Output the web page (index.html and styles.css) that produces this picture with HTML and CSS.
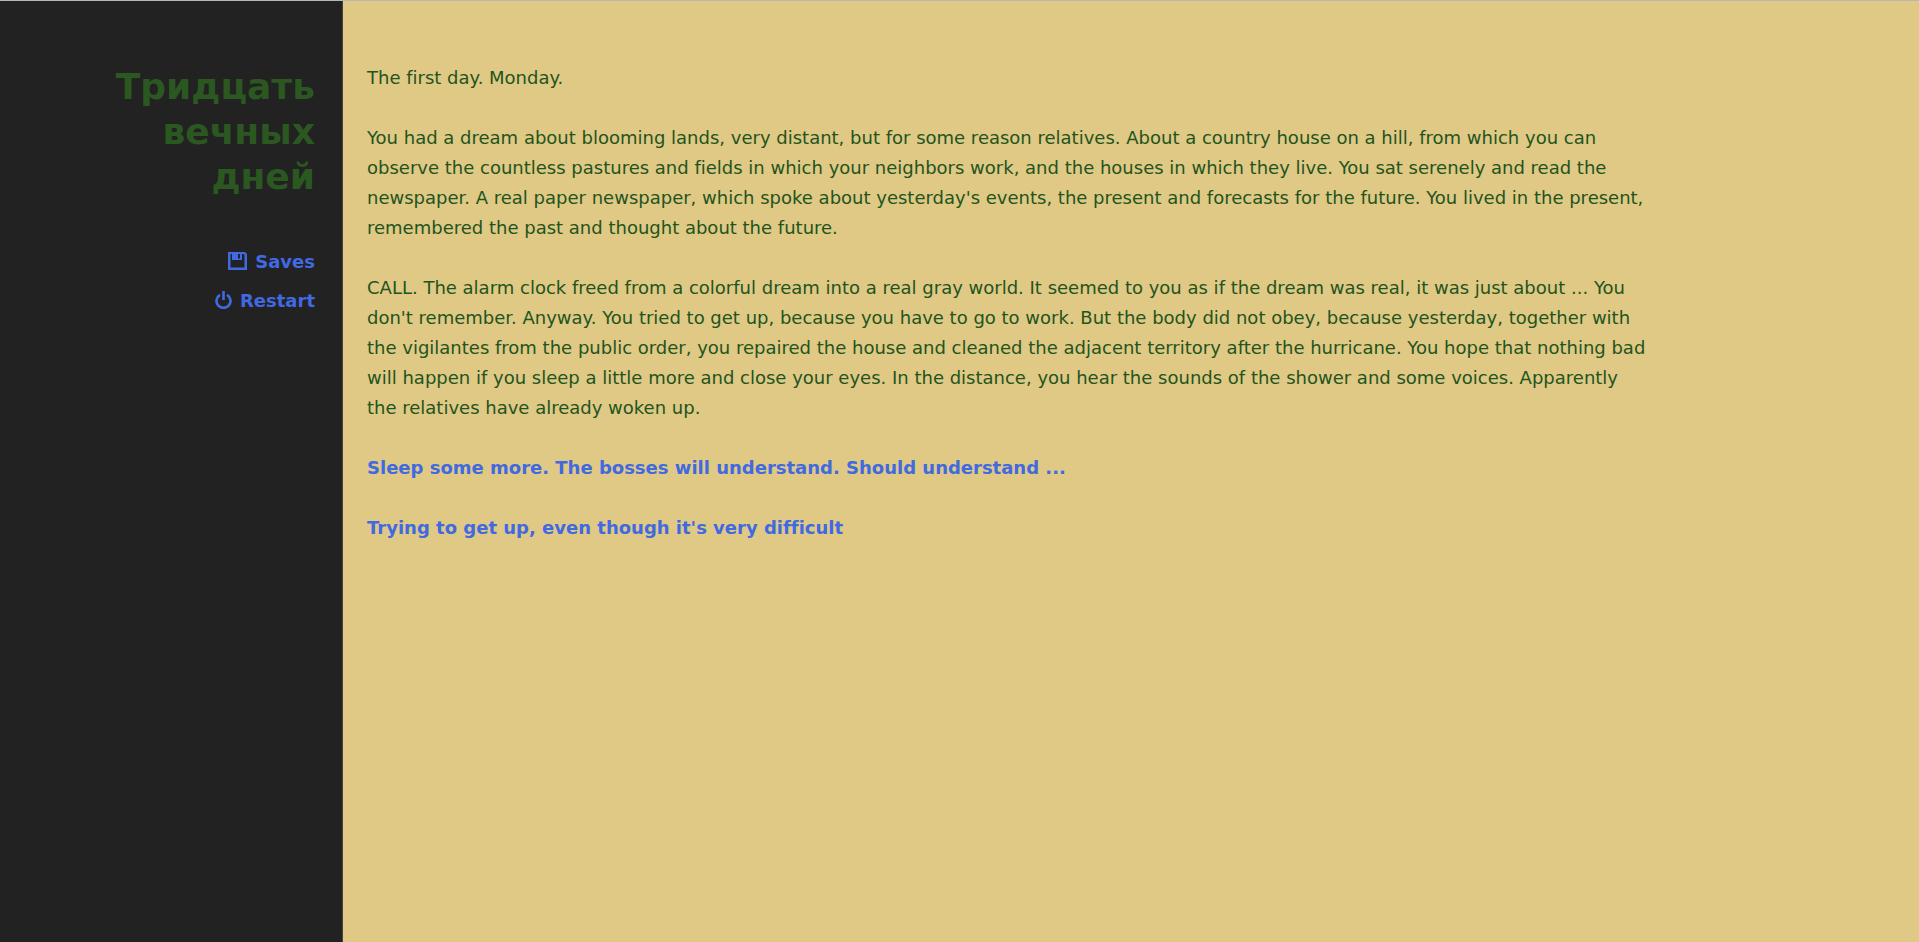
FILE: index.html
```
<!DOCTYPE html>
<html lang="ru">
<head>
<meta charset="utf-8">
<title>Тридцать вечных дней</title>
<link rel="stylesheet" href="styles.css">
</head>
<body>
<div class="page">
<aside class="sidebar">
<h1 class="title">Тридцать вечных дней</h1>
<nav class="menu">
<button class="menu-item" type="button"><svg class="icon" viewBox="0 0 19 18" aria-hidden="true"><path fill-rule="evenodd" d="M0 0h17l2 2v16H0zM2.500 2v13.500h14V3l-1-1h-1.500v6H4V2zM10 2v4.500h2V2z"/></svg>Saves</button>
<button class="menu-item" type="button"><svg class="icon power" viewBox="0 0 17 18" aria-hidden="true"><path class="stroke" d="M5 3.800a7 7 0 1 0 7 0M8.500 0v9"/></svg>Restart</button>
</nav>
</aside>
<main class="story" lang="en">
<div class="passage">
<p>The first day. Monday.</p>
<p>You had a dream about blooming lands, very distant, but for some reason relatives. About a country house on a hill, from which you can observe the countless pastures and fields in which your neighbors work, and the houses in which they live. You sat serenely and read the newspaper. A real paper newspaper, which spoke about yesterday's events, the present and forecasts for the future. You lived in the present, remembered the past and thought about the future.</p>
<p>CALL. The alarm clock freed from a colorful dream into a real gray world. It seemed to you as if the dream was real, it was just about ... You don't remember. Anyway. You tried to get up, because you have to go to work. But the body did not obey, because yesterday, together with the vigilantes from the public order, you repaired the house and cleaned the adjacent territory after the hurricane. You hope that nothing bad will happen if you sleep a little more and close your eyes. In the distance, you hear the sounds of the shower and some voices. Apparently the relatives have already woken up.</p>
<p><a class="choice" href="#sleep">Sleep some more. The bosses will understand. Should understand ...</a></p>
<p><a class="choice" href="#rise">Trying to get up, even though it's very difficult</a></p>
</div>
</main>
</div>
</body>
</html>
```
FILE: styles.css
```
* { box-sizing: border-box; }
body {
  margin: 0;
  background: #dfc984;
  color: #24541e;
  font: 18px/30px Verdana, "DejaVu Sans", sans-serif;
  font-variant-ligatures: none;
}
.page {
  display: flex;
  min-height: 100vh;
  border-top: 1px solid #b5b8b5;
}
.sidebar {
  flex: 0 0 343px;
  padding: 63px 27px 0 100px;
  background: #222;
  border-right: 1px solid #444;
  text-align: right;
}
.title {
  margin: 0 0 48px;
  color: #2b5720;
  font-size: 36px;
  line-height: 45px;
}
.menu {
  display: flex;
  flex-direction: column;
  align-items: flex-end;
  gap: 9px;
}
.menu-item {
  display: flex;
  align-items: center;
  gap: 8px;
  padding: 0;
  border: 0;
  background: none;
  color: #4169e1;
  font: inherit;
  font-weight: bold;
  cursor: pointer;
}
.icon {
  width: 19px;
  height: 18px;
  margin-bottom: 3px;
  fill: currentColor;
}
.power { width: 17px; }
.stroke {
  fill: none;
  stroke: currentColor;
  stroke-width: 2.6;
}
.story {
  flex: 1;
  padding: 62px 24px;
}
.passage { max-width: 1280px; }
.passage p { margin: 0 0 30px; }
.choice {
  color: #4169e1;
  font-weight: bold;
  text-decoration: none;
}
```
